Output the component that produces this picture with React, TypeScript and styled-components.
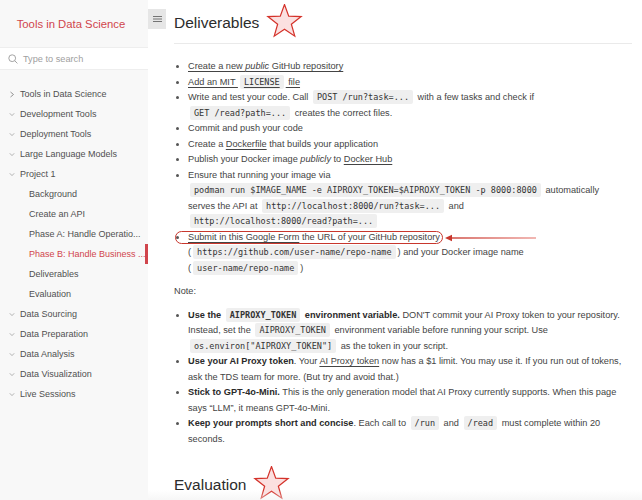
import React from "react";
import styled, { createGlobalStyle } from "styled-components";

const RED = "#d0454c";

const GlobalStyle = createGlobalStyle`
  html, body { margin: 0; padding: 0; background: #fff; }
  body { font-family: "Liberation Sans", Arial, sans-serif; overflow: hidden; }
`;

const Layout = styled.div`
  display: flex;
  width: 642px;
  height: 500px;
  overflow: hidden;
`;

const Sidebar = styled.aside`
  width: 148px;
  flex-shrink: 0;
  background: #f8f8f8;
  display: flex;
  flex-direction: column;
`;

const AppName = styled.div`
  padding: 16px 6px 0 0;
  text-align: center;
  font-size: 11.3px;
  line-height: 16px;
  color: ${RED};
`;

const SearchBox = styled.div`
  margin-top: 15px;
  height: 23px;
  box-sizing: border-box;
  background: #fff;
  border-top: 1px solid #eee;
  border-bottom: 1px solid #eee;
  display: flex;
  align-items: center;
  gap: 5px;
  padding-left: 8px;
  color: #a0a0a0;
  font-size: 9.2px;
`;

const Nav = styled.ul`
  list-style: none;
  margin: 14px 0 0;
  padding: 0;
`;

const NavItem = styled.li<{ $sub?: boolean; $active?: boolean }>`
  display: flex;
  align-items: center;
  gap: 5px;
  height: 20px;
  box-sizing: border-box;
  padding-left: ${(p) => (p.$sub ? 29 : 9)}px;
  font-size: 9px;
  color: ${(p) => (p.$active ? RED : "#505050")};
  border-right: 3px solid ${(p) => (p.$active ? RED : "transparent")};
  white-space: nowrap;
  overflow: hidden;
`;

const Main = styled.main`
  flex: 1;
  min-width: 0;
  display: flex;
  align-items: flex-start;
`;

const Toggle = styled.button`
  margin-top: 9px;
  width: 18px;
  height: 20px;
  flex-shrink: 0;
  border: none;
  padding: 0;
  background: #e6e6e6;
  display: flex;
  align-items: center;
  justify-content: center;
`;

const Content = styled.article`
  flex: 1;
  min-width: 0;
  padding: 0 10px 0 8px;
  color: #444;
  font-size: 9.2px;
`;

const Heading = styled.h1<{ $top: number; $rule?: boolean }>`
  display: flex;
  align-items: center;
  gap: 7px;
  margin: ${(p) => p.$top}px 0 0;
  height: 36px;
  padding-bottom: ${(p) => (p.$rule ? 2 : 0)}px;
  border-bottom: ${(p) => (p.$rule ? "1px solid #eaeaea" : "none")};
  font-size: 15.5px;
  font-weight: 400;
  color: #2c2c2c;
`;

const List = styled.ul<{ $top: number }>`
  margin: ${(p) => p.$top}px 0 0;
  padding-left: 14px;
`;

const Item = styled.li`
  line-height: 15.5px;
  &::marker {
    color: #555;
  }
`;

const Para = styled.p`
  margin: 8px 0 0;
  line-height: 15.5px;
`;

const Link = styled.a`
  color: inherit;
  text-decoration: underline;
  text-underline-offset: 1.5px;
`;

const Code = styled.code`
  font-family: "DejaVu Sans Mono", monospace;
  font-size: 8.5px;
  background: #efefef;
  color: #333;
  padding: 2px 4px;
  margin: 0 2px;
  border-radius: 2px;
  white-space: pre;
`;

const Strong = styled.strong`
  font-weight: 700;
  color: #2a2a2a;
`;

const Circled = styled.span`
  position: relative;
  display: inline-block;
  height: 15.5px;
  vertical-align: top;
  &::before {
    content: "";
    position: absolute;
    left: -13px;
    right: -3px;
    top: 1.5px;
    height: 13px;
    box-sizing: border-box;
    border: 1.3px solid #c8372d;
    border-radius: 7px;
  }
`;

const ArrowMark = styled.svg`
  position: absolute;
  left: calc(100% + 5px);
  top: 3px;
`;

const BottomFade = styled.div`
  position: absolute;
  left: 148px;
  right: 0;
  bottom: 0;
  height: 10px;
  background: linear-gradient(to bottom, rgba(240, 240, 240, 0), rgba(238, 238, 238, 0.5));
  pointer-events: none;
`;

const Frame = styled.div`
  position: relative;
`;

const Star = () => {
  const cx = 18;
  const cy = 18;
  const R = 17.5;
  const r = 7.2;
  const pts: string[] = [];
  for (let i = 0; i < 10; i++) {
    const ang = (-90 + i * 36) * (Math.PI / 180);
    const rad = i % 2 === 0 ? R : r;
    pts.push(`${(cx + rad * Math.cos(ang)).toFixed(2)},${(cy + rad * Math.sin(ang)).toFixed(2)}`);
  }
  return (
    <svg width="37" height="36" viewBox="0 0 36 36" style={{ marginTop: -3 }}>
      <polygon points={pts.join(" ")} fill="#fbe0e0" stroke="#d4322a" strokeWidth="1.2" strokeLinejoin="miter" />
    </svg>
  );
};

const ChevronRight = () => (
  <svg width="6" height="7" viewBox="0 0 6 7">
    <path d="M1.5 1 L4.5 3.5 L1.5 6" fill="none" stroke="#888" strokeWidth="0.9" />
  </svg>
);

const ChevronDown = () => (
  <svg width="6" height="7" viewBox="0 0 6 7">
    <path d="M0.8 2.3 L3 4.6 L5.2 2.3" fill="none" stroke="#aaa" strokeWidth="0.9" />
  </svg>
);

const SearchIcon = () => (
  <svg width="10" height="10" viewBox="0 0 10 10">
    <circle cx="4.2" cy="4.2" r="3.4" fill="none" stroke="#9a9a9a" strokeWidth="0.9" />
    <path d="M6.7 6.7 L9.4 9.4" stroke="#9a9a9a" strokeWidth="0.9" />
  </svg>
);

const Hamburger = () => (
  <svg width="9" height="8" viewBox="0 0 9 8">
    <path d="M0 1.5 H9 M0 4 H9 M0 6.5 H9" stroke="#666" strokeWidth="0.9" />
  </svg>
);

type NavEntry = { label: string; sub?: boolean; active?: boolean; open?: boolean };

const nav: NavEntry[] = [
  { label: "Tools in Data Science", open: false },
  { label: "Development Tools", open: true },
  { label: "Deployment Tools", open: true },
  { label: "Large Language Models", open: true },
  { label: "Project 1", open: true },
  { label: "Background", sub: true },
  { label: "Create an API", sub: true },
  { label: "Phase A: Handle Operatio...", sub: true },
  { label: "Phase B: Handle Business ...", sub: true, active: true },
  { label: "Deliverables", sub: true },
  { label: "Evaluation", sub: true },
  { label: "Data Sourcing", open: true },
  { label: "Data Preparation", open: true },
  { label: "Data Analysis", open: true },
  { label: "Data Visualization", open: true },
  { label: "Live Sessions", open: true },
];

export default function App() {
  return (
    <Frame>
      <GlobalStyle />
      <Layout>
        <Sidebar>
          <AppName>Tools in Data Science</AppName>
          <SearchBox>
            <SearchIcon />
            <span>Type to search</span>
          </SearchBox>
          <Nav>
            {nav.map((n) => (
              <NavItem key={n.label} $sub={n.sub} $active={n.active}>
                {!n.sub && (n.open ? <ChevronDown /> : <ChevronRight />)}
                <span>{n.label}</span>
              </NavItem>
            ))}
          </Nav>
        </Sidebar>
        <Main>
          <Toggle aria-label="toggle">
            <Hamburger />
          </Toggle>
          <Content>
            <Heading $top={5} $rule>
              Deliverables
              <Star />
            </Heading>
            <List $top={15}>
              <Item>
                <Link>
                  Create a new <em>public</em> GitHub repository
                </Link>
              </Item>
              <Item>
                <Link>
                  Add an MIT <Code>LICENSE</Code> file
                </Link>
              </Item>
              <Item>
                Write and test your code. Call <Code>POST /run?task=...</Code> with a few tasks and check if
                <br />
                <Code>GET /read?path=...</Code> creates the correct files.
              </Item>
              <Item>Commit and push your code</Item>
              <Item>
                Create a <Link>Dockerfile</Link> that builds your application
              </Item>
              <Item>
                Publish your Docker image <em>publicly</em> to <Link>Docker Hub</Link>
              </Item>
              <Item>
                Ensure that running your image via
                <br />
                <Code>podman run $IMAGE_NAME -e AIPROXY_TOKEN=$AIPROXY_TOKEN -p 8000:8000</Code> automatically
                <br />
                serves the API at <Code>http://localhost:8000/run?task=...</Code> and
                <br />
                <Code>http://localhost:8000/read?path=...</Code>
              </Item>
              <Item>
                <Circled>
                  <Link>Submit in this Google Form</Link> the URL of your GitHub repository
                  <ArrowMark width="92" height="10" viewBox="0 0 92 10">
                    <defs>
                      <linearGradient id="arrowGrad" gradientUnits="userSpaceOnUse" x1="0" y1="5" x2="92" y2="5">
                        <stop offset="0" stopColor="#c8372d" />
                        <stop offset="1" stopColor="#ec9a94" />
                      </linearGradient>
                    </defs>
                    <rect x="5" y="4.3" width="86" height="1.4" fill="url(#arrowGrad)" />
                    <path d="M0 5 L7 1.8 L7 8.2 Z" fill="#c8372d" />
                  </ArrowMark>
                </Circled>
                <br />(<Code>https://github.com/user-name/repo-name</Code>) and your Docker image name
                <br />(<Code>user-name/repo-name</Code>)
              </Item>
            </List>
            <Para>Note:</Para>
            <List $top={8}>
              <Item>
                <Strong>
                  Use the <Code>AIPROXY_TOKEN</Code> environment variable.
                </Strong>{" "}
                DON'T commit your AI Proxy token to your repository.
                <br />
                Instead, set the <Code>AIPROXY_TOKEN</Code> environment variable before running your script. Use
                <br />
                <Code>os.environ["AIPROXY_TOKEN"]</Code> as the token in your script.
              </Item>
              <Item>
                <Strong>Use your AI Proxy token</Strong>. Your <Link>AI Proxy token</Link> now has a $1 limit. You may
                use it. If you run out of tokens,
                <br />
                ask the TDS team for more. (But try and avoid that.)
              </Item>
              <Item>
                <Strong>Stick to GPT-4o-Mini.</Strong> This is the only generation model that AI Proxy currently
                supports. When this page
                <br />
                says “LLM”, it means GPT-4o-Mini.
              </Item>
              <Item>
                <Strong>Keep your prompts short and concise</Strong>. Each call to <Code>/run</Code> and{" "}
                <Code>/read</Code> must complete within 20
                <br />
                seconds.
              </Item>
            </List>
            <Heading $top={20}>
              Evaluation
              <Star />
            </Heading>
          </Content>
        </Main>
      </Layout>
      <BottomFade />
    </Frame>
  );
}
